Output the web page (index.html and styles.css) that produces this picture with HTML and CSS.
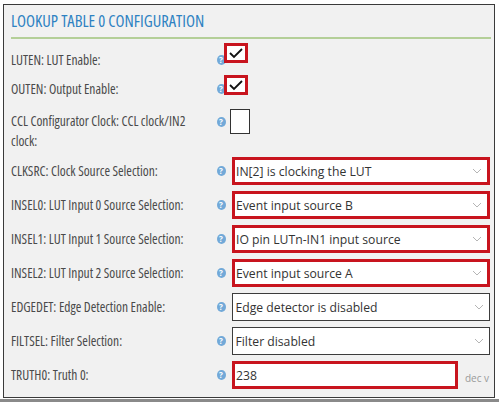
FILE: index.html
```html
<!DOCTYPE html>
<html>
<head>
<meta charset="utf-8">
<link rel="stylesheet" href="styles.css">
</head>
<body>
<div class="panel">
  <div class="title">LOOKUP TABLE 0 CONFIGURATION</div>
  <div class="rule"></div>

  <div class="row r-check r1">
    <div class="label">LUTEN: LUT Enable:</div>
    <span class="help">?</span>
    <span class="check red"><svg viewBox="0 0 18 14" width="18" height="14"><polyline points="3,7 7,11 15,3" fill="none" stroke="#111" stroke-width="1.8"/></svg></span>
  </div>
  <div class="row r-check r2">
    <div class="label">OUTEN: Output Enable:</div>
    <span class="help">?</span>
    <span class="check red"><svg viewBox="0 0 18 14" width="18" height="14"><polyline points="3,7 7,11 15,3" fill="none" stroke="#111" stroke-width="1.8"/></svg></span>
  </div>
  <div class="row r-ccl">
    <div class="label">CCL Configurator Clock: CCL clock/IN2 clock:</div>
    <span class="help">?</span>
    <span class="check plain"></span>
  </div>

  <div class="row r-field">
    <div class="label">CLKSRC: Clock Source Selection:</div>
    <span class="help">?</span>
    <div class="select red"><span>IN[2] is clocking the LUT</span><svg class="chev" viewBox="0 0 10 6" width="10" height="6"><polyline points="1,1 5,5 9,1" fill="none" stroke="#b5b5b5" stroke-width="1"/></svg></div>
  </div>
  <div class="row r-field">
    <div class="label">INSEL0: LUT Input 0 Source Selection:</div>
    <span class="help">?</span>
    <div class="select red"><span>Event input source B</span><svg class="chev" viewBox="0 0 10 6" width="10" height="6"><polyline points="1,1 5,5 9,1" fill="none" stroke="#b5b5b5" stroke-width="1"/></svg></div>
  </div>
  <div class="row r-field">
    <div class="label">INSEL1: LUT Input 1 Source Selection:</div>
    <span class="help">?</span>
    <div class="select red"><span>IO pin LUTn-IN1 input source</span><svg class="chev" viewBox="0 0 10 6" width="10" height="6"><polyline points="1,1 5,5 9,1" fill="none" stroke="#b5b5b5" stroke-width="1"/></svg></div>
  </div>
  <div class="row r-field">
    <div class="label">INSEL2: LUT Input 2 Source Selection:</div>
    <span class="help">?</span>
    <div class="select red"><span>Event input source A</span><svg class="chev" viewBox="0 0 10 6" width="10" height="6"><polyline points="1,1 5,5 9,1" fill="none" stroke="#b5b5b5" stroke-width="1"/></svg></div>
  </div>
  <div class="row r-field">
    <div class="label">EDGEDET: Edge Detection Enable:</div>
    <span class="help">?</span>
    <div class="select plain"><span>Edge detector is disabled</span><svg class="chev" viewBox="0 0 10 6" width="10" height="6"><polyline points="1,1 5,5 9,1" fill="none" stroke="#b5b5b5" stroke-width="1"/></svg></div>
  </div>
  <div class="row r-field">
    <div class="label">FILTSEL: Filter Selection:</div>
    <span class="help">?</span>
    <div class="select plain"><span>Filter disabled</span><svg class="chev" viewBox="0 0 10 6" width="10" height="6"><polyline points="1,1 5,5 9,1" fill="none" stroke="#b5b5b5" stroke-width="1"/></svg></div>
  </div>
  <div class="row r-field">
    <div class="label">TRUTH0: Truth 0:</div>
    <span class="help">?</span>
    <div class="truth">
      <div class="input red"><span>238</span></div>
      <span class="unit">dec v</span>
    </div>
  </div>
</div>
<div class="strip"></div>
</body>
</html>
```

FILE: styles.css
```css
html, body {
  margin: 0;
  padding: 0;
  background: #ffffff;
}
body {
  width: 499px;
  height: 402px;
  overflow: hidden;
  font-family: "Open Sans", "Liberation Sans", sans-serif;
}
.panel {
  box-sizing: border-box;
  width: 492px;
  height: 394px;
  margin: 4px 0 0 3px;
  border: 1px solid #3a3a3a;
  background: #f1f1f1;
  padding: 0 3px 0 7px;
  display: flex;
  flex-direction: column;
}
.title {
  flex: none;
  height: 32px;
  line-height: 30px;
  padding-top: 1px;
  box-sizing: border-box;
  color: #2e82c2;
  font-size: 16.5px;
  font-stretch: 75%;
}
.rule {
  flex: none;
  height: 2px;
  background: #b4cf98;
}
.row {
  flex: none;
  display: grid;
  grid-template-columns: 203px 14px 1fr;
  column-gap: 0;
  align-items: center;
  box-sizing: border-box;
}
.label {
  color: #4a4a4a;
  font-size: 13.5px;
  font-stretch: 75%;
  white-space: nowrap;
}
.r1 { height: 36px; padding-top: 5px; }
.r2 { height: 28px; }
.r-ccl {
  height: 51px;
  align-items: start;
}
.r-ccl .label {
  white-space: normal;
  width: 200px;
  line-height: 20px;
  padding-top: 8px;
}
.r-ccl .help { margin-top: 14px; }
.r-field {
  height: 34px;
  grid-template-rows: 34px;
}
.help {
  width: 9px;
  height: 10px;
  border-radius: 50%;
  background: #72a9d8;
  color: #fff;
  font-size: 8px;
  font-weight: bold;
  line-height: 10px;
  text-align: center;
  justify-self: center;
}
.check {
  box-sizing: border-box;
  display: flex;
  align-items: center;
  justify-content: center;
  background: #fff;
}
.check.red {
  width: 24px;
  height: 20px;
  border: 3px solid #c8141e;
  margin-top: -13px;
  margin-left: -4px;
}
.r2 .check.red { margin-top: -9px; }
.check.plain {
  width: 20px;
  height: 25px;
  border: 1px solid #333;
  margin-top: 6px;
  margin-left: 2px;
}
.select, .input {
  box-sizing: border-box;
  height: 28px;
  margin-left: 4px;
  background: #fff;
  display: flex;
  align-items: center;
  justify-content: space-between;
  padding: 0 5px 0 1px;
  color: #333;
  font-size: 12.2px;
  width: 258px;
}
.red { border: 3px solid #c8141e; }
.select.plain { border: 1.5px solid #3c3c3c; padding-left: 2.5px; }
.chev { flex: none; }
.truth {
  display: flex;
  align-items: center;
}
.truth .input { width: 226px; }
.unit {
  margin-left: 7px;
  margin-top: 6px;
  color: #9a9a9a;
  font-size: 10px;
}
.strip {
  height: 4px;
  margin-top: 1px;
  background: #8a8a8a;
}
```
